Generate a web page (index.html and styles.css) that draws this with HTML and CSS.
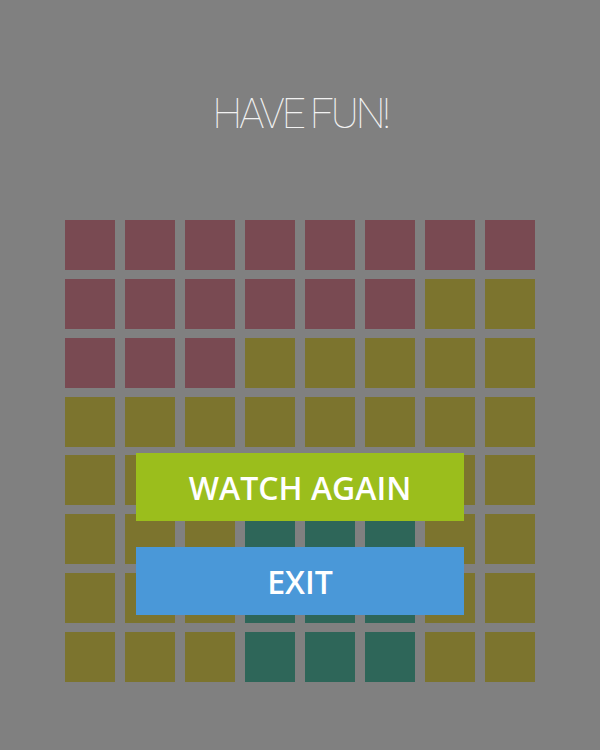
FILE: index.html
```html
<!DOCTYPE html>
<html>
<head>
<meta charset="utf-8">
<link rel="stylesheet" href="styles.css">
</head>
<body>
<div class="screen">
  <h1 class="title">HAVE FUN!</h1>
  <div class="board">
    <div class="grid">
      <div class="c r"></div><div class="c r"></div><div class="c r"></div><div class="c r"></div><div class="c r"></div><div class="c r"></div><div class="c r"></div><div class="c r"></div>
      <div class="c r"></div><div class="c r"></div><div class="c r"></div><div class="c r"></div><div class="c r"></div><div class="c r"></div><div class="c o"></div><div class="c o"></div>
      <div class="c r"></div><div class="c r"></div><div class="c r"></div><div class="c o"></div><div class="c o"></div><div class="c o"></div><div class="c o"></div><div class="c o"></div>
      <div class="c o"></div><div class="c o"></div><div class="c o"></div><div class="c o"></div><div class="c o"></div><div class="c o"></div><div class="c o"></div><div class="c o"></div>
      <div class="c o"></div><div class="c o"></div><div class="c o"></div><div class="c o"></div><div class="c o"></div><div class="c o"></div><div class="c o"></div><div class="c o"></div>
      <div class="c o"></div><div class="c o"></div><div class="c o"></div><div class="c t"></div><div class="c t"></div><div class="c t"></div><div class="c o"></div><div class="c o"></div>
      <div class="c o"></div><div class="c o"></div><div class="c o"></div><div class="c t"></div><div class="c t"></div><div class="c t"></div><div class="c o"></div><div class="c o"></div>
      <div class="c o"></div><div class="c o"></div><div class="c o"></div><div class="c t"></div><div class="c t"></div><div class="c t"></div><div class="c o"></div><div class="c o"></div>
    </div>
    <div class="menu">
      <div class="btn again">WATCH AGAIN</div>
      <div class="btn exit">EXIT</div>
    </div>
  </div>
</div>
</body>
</html>
```
FILE: styles.css
```css
html, body {
  margin: 0;
  padding: 0;
  background: #808080;
}
.screen {
  width: 600px;
  height: 750px;
  display: flex;
  flex-direction: column;
  align-items: center;
}
.title {
  margin: 93px 0 0 0;
  height: 127px;
  font-family: "Roboto", sans-serif;
  font-weight: 100;
  font-size: 42px;
  line-height: 42px;
  color: #f2f2f2;
  letter-spacing: -3px;
}
.board {
  position: relative;
  width: 470px;
}
.grid {
  display: grid;
  grid-template-columns: repeat(8, 50px);
  grid-auto-rows: 50px;
  column-gap: 10px;
  row-gap: 8.86px;
}
.c.r { background: #794a52; }
.c.o { background: #7c742e; }
.c.t { background: #2e6659; }
.menu {
  position: absolute;
  left: 71px;
  top: 233px;
  width: 328px;
  display: flex;
  flex-direction: column;
  gap: 26px;
}
.btn {
  height: 68px;
  display: flex;
  align-items: center;
  justify-content: center;
  font-family: "Open Sans", sans-serif;
  font-weight: 600;
  font-size: 32px;
  color: #ffffff;
}
.again { background: #9bbe1c; }
.exit { background: #4a98d8; }
```
